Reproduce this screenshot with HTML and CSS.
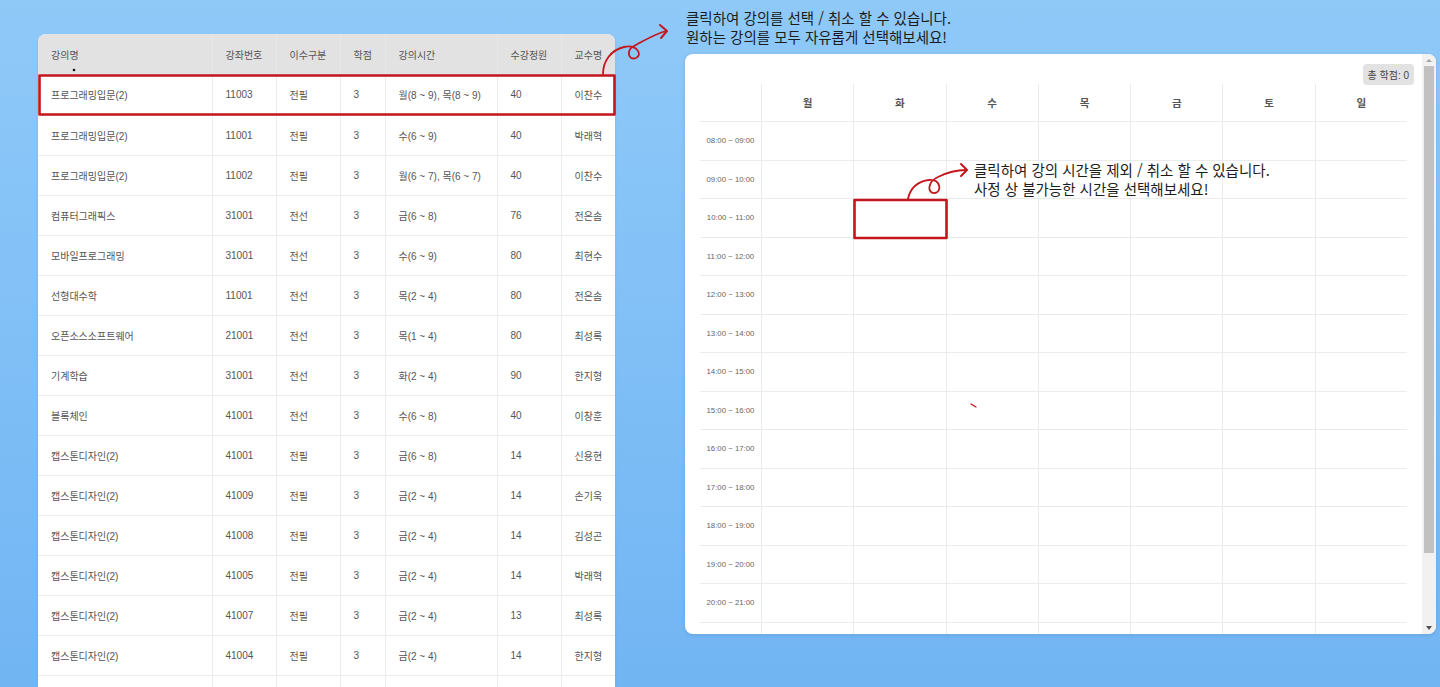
FILE: index.html
```html
<!DOCTYPE html>
<html lang="ko">
<head>
<meta charset="utf-8">
<title>강의 시간표</title>
<link rel="stylesheet" href="styles.css">
</head>
<body>
<main class="stage">
  <section class="course-card">
    <table class="course-table">
      <colgroup>
        <col class="c-name"><col class="c-code"><col class="c-type"><col class="c-credit"><col class="c-time"><col class="c-cap"><col class="c-prof">
      </colgroup>
      <thead>
        <tr><th>강의명</th><th>강좌번호</th><th>이수구분</th><th>학점</th><th>강의시간</th><th>수강정원</th><th>교수명</th></tr>
      </thead>
      <tbody>
        <tr><td>프로그래밍입문(2)</td><td>11003</td><td>전필</td><td>3</td><td>월(8 ~ 9), 목(8 ~ 9)</td><td>40</td><td>이찬수</td></tr>
        <tr><td>프로그래밍입문(2)</td><td>11001</td><td>전필</td><td>3</td><td>수(6 ~ 9)</td><td>40</td><td>박래혁</td></tr>
        <tr><td>프로그래밍입문(2)</td><td>11002</td><td>전필</td><td>3</td><td>월(6 ~ 7), 목(6 ~ 7)</td><td>40</td><td>이찬수</td></tr>
        <tr><td>컴퓨터그래픽스</td><td>31001</td><td>전선</td><td>3</td><td>금(6 ~ 8)</td><td>76</td><td>전은솜</td></tr>
        <tr><td>모바일프로그래밍</td><td>31001</td><td>전선</td><td>3</td><td>수(6 ~ 9)</td><td>80</td><td>최현수</td></tr>
        <tr><td>선형대수학</td><td>11001</td><td>전선</td><td>3</td><td>목(2 ~ 4)</td><td>80</td><td>전은솜</td></tr>
        <tr><td>오픈소스소프트웨어</td><td>21001</td><td>전선</td><td>3</td><td>목(1 ~ 4)</td><td>80</td><td>최성록</td></tr>
        <tr><td>기계학습</td><td>31001</td><td>전선</td><td>3</td><td>화(2 ~ 4)</td><td>90</td><td>한지형</td></tr>
        <tr><td>블록체인</td><td>41001</td><td>전선</td><td>3</td><td>수(6 ~ 8)</td><td>40</td><td>이창훈</td></tr>
        <tr><td>캡스톤디자인(2)</td><td>41001</td><td>전필</td><td>3</td><td>금(6 ~ 8)</td><td>14</td><td>신용현</td></tr>
        <tr><td>캡스톤디자인(2)</td><td>41009</td><td>전필</td><td>3</td><td>금(2 ~ 4)</td><td>14</td><td>손기욱</td></tr>
        <tr><td>캡스톤디자인(2)</td><td>41008</td><td>전필</td><td>3</td><td>금(2 ~ 4)</td><td>14</td><td>김성곤</td></tr>
        <tr><td>캡스톤디자인(2)</td><td>41005</td><td>전필</td><td>3</td><td>금(2 ~ 4)</td><td>14</td><td>박래혁</td></tr>
        <tr><td>캡스톤디자인(2)</td><td>41007</td><td>전필</td><td>3</td><td>금(2 ~ 4)</td><td>13</td><td>최성록</td></tr>
        <tr><td>캡스톤디자인(2)</td><td>41004</td><td>전필</td><td>3</td><td>금(2 ~ 4)</td><td>14</td><td>한지형</td></tr>
        <tr><td></td><td></td><td></td><td></td><td></td><td></td><td></td></tr>
      </tbody>
    </table>
  </section>

  <section class="timetable-panel">
    <div class="tt-scroll">
      <div class="tt-top"><span class="credit-badge">총 학점: 0</span></div>
      <div class="tt-grid">
        <div class="tt-row tt-head">
          <div class="tt-time"></div><div class="tt-day">월</div><div class="tt-day">화</div><div class="tt-day">수</div><div class="tt-day">목</div><div class="tt-day">금</div><div class="tt-day">토</div><div class="tt-day">일</div>
        </div>
        <div class="tt-row"><div class="tt-time">08:00 ~ 09:00</div><div class="tt-cell"></div><div class="tt-cell"></div><div class="tt-cell"></div><div class="tt-cell"></div><div class="tt-cell"></div><div class="tt-cell"></div><div class="tt-cell"></div></div>
        <div class="tt-row"><div class="tt-time">09:00 ~ 10:00</div><div class="tt-cell"></div><div class="tt-cell"></div><div class="tt-cell"></div><div class="tt-cell"></div><div class="tt-cell"></div><div class="tt-cell"></div><div class="tt-cell"></div></div>
        <div class="tt-row"><div class="tt-time">10:00 ~ 11:00</div><div class="tt-cell"></div><div class="tt-cell"></div><div class="tt-cell"></div><div class="tt-cell"></div><div class="tt-cell"></div><div class="tt-cell"></div><div class="tt-cell"></div></div>
        <div class="tt-row"><div class="tt-time">11:00 ~ 12:00</div><div class="tt-cell"></div><div class="tt-cell"></div><div class="tt-cell"></div><div class="tt-cell"></div><div class="tt-cell"></div><div class="tt-cell"></div><div class="tt-cell"></div></div>
        <div class="tt-row"><div class="tt-time">12:00 ~ 13:00</div><div class="tt-cell"></div><div class="tt-cell"></div><div class="tt-cell"></div><div class="tt-cell"></div><div class="tt-cell"></div><div class="tt-cell"></div><div class="tt-cell"></div></div>
        <div class="tt-row"><div class="tt-time">13:00 ~ 14:00</div><div class="tt-cell"></div><div class="tt-cell"></div><div class="tt-cell"></div><div class="tt-cell"></div><div class="tt-cell"></div><div class="tt-cell"></div><div class="tt-cell"></div></div>
        <div class="tt-row"><div class="tt-time">14:00 ~ 15:00</div><div class="tt-cell"></div><div class="tt-cell"></div><div class="tt-cell"></div><div class="tt-cell"></div><div class="tt-cell"></div><div class="tt-cell"></div><div class="tt-cell"></div></div>
        <div class="tt-row"><div class="tt-time">15:00 ~ 16:00</div><div class="tt-cell"></div><div class="tt-cell"></div><div class="tt-cell"></div><div class="tt-cell"></div><div class="tt-cell"></div><div class="tt-cell"></div><div class="tt-cell"></div></div>
        <div class="tt-row"><div class="tt-time">16:00 ~ 17:00</div><div class="tt-cell"></div><div class="tt-cell"></div><div class="tt-cell"></div><div class="tt-cell"></div><div class="tt-cell"></div><div class="tt-cell"></div><div class="tt-cell"></div></div>
        <div class="tt-row"><div class="tt-time">17:00 ~ 18:00</div><div class="tt-cell"></div><div class="tt-cell"></div><div class="tt-cell"></div><div class="tt-cell"></div><div class="tt-cell"></div><div class="tt-cell"></div><div class="tt-cell"></div></div>
        <div class="tt-row"><div class="tt-time">18:00 ~ 19:00</div><div class="tt-cell"></div><div class="tt-cell"></div><div class="tt-cell"></div><div class="tt-cell"></div><div class="tt-cell"></div><div class="tt-cell"></div><div class="tt-cell"></div></div>
        <div class="tt-row"><div class="tt-time">19:00 ~ 20:00</div><div class="tt-cell"></div><div class="tt-cell"></div><div class="tt-cell"></div><div class="tt-cell"></div><div class="tt-cell"></div><div class="tt-cell"></div><div class="tt-cell"></div></div>
        <div class="tt-row"><div class="tt-time">20:00 ~ 21:00</div><div class="tt-cell"></div><div class="tt-cell"></div><div class="tt-cell"></div><div class="tt-cell"></div><div class="tt-cell"></div><div class="tt-cell"></div><div class="tt-cell"></div></div>
        <div class="tt-row"><div class="tt-time"></div><div class="tt-cell"></div><div class="tt-cell"></div><div class="tt-cell"></div><div class="tt-cell"></div><div class="tt-cell"></div><div class="tt-cell"></div><div class="tt-cell"></div></div>
      </div>
    </div>
    <div class="scrollbar">
      <div class="sb-arrow sb-up"></div>
      <div class="sb-track"><div class="sb-thumb"></div></div>
      <div class="sb-arrow sb-down"></div>
    </div>
  </section>

  <p class="note note-top">클릭하여 강의를 선택 / 취소 할 수 있습니다.<br>원하는 강의를 모두 자유롭게 선택해보세요!</p>
  <p class="note note-mid">클릭하여 강의 시간을 제외 / 취소 할 수 있습니다.<br>사정 상 불가능한 시간을 선택해보세요!</p>

  <svg class="overlay" width="1440" height="687" viewBox="0 0 1440 687" aria-hidden="true">
    <g fill="none" stroke="#c4161c" stroke-linecap="round" stroke-linejoin="round">
      <rect x="39.5" y="75.5" width="575" height="39" stroke-width="2.6"/>
      <path d="M603 74 C603 61 611 50 624 47 C637 44 643 55 636 58 C628 61 626 50 634 46 C645 40 655 34 666 31" stroke-width="1.8"/>
      <path d="M660 25 L667 31 L661 38" stroke-width="2"/>
      <rect x="854.5" y="200" width="92" height="38" stroke-width="2.6"/>
      <path d="M908 199 C910 188 918 181 929 180 C941 179 942 192 935 193 C927 194 927 182 938 177 C948 172 956 170 966 170" stroke-width="1.8"/>
      <path d="M961 164 L967 170 L961 176" stroke-width="2"/>
      <path d="M971 404 L976 407" stroke-width="1.4"/>
    </g>
    <circle cx="74" cy="70" r="1.3" fill="#111"/>
  </svg>
</main>
</body>
</html>
```

FILE: styles.css
```css
* { box-sizing: border-box; }

html, body {
  margin: 0;
  padding: 0;
  width: 1440px;
  height: 687px;
  overflow: hidden;
}

body {
  background: linear-gradient(180deg, #8fc9f8 0%, #80bff6 50%, #71b5f3 100%);
  font-family: "Liberation Sans", "Noto Sans CJK KR", sans-serif;
  color: #555;
}

.stage {
  position: relative;
  display: flex;
  align-items: flex-start;
  gap: 70px;
  padding-left: 38px;
  height: 687px;
}

/* ---------- course table ---------- */
.course-card {
  margin-top: 34px;
  width: 577px;
  background: #fff;
  border-radius: 8px 8px 0 0;
  overflow: hidden;
  box-shadow: 0 1px 3px rgba(0, 0, 0, 0.08);
  flex: none;
}

.course-table {
  width: 577px;
  border-collapse: collapse;
  table-layout: fixed;
  font-size: 10px;
}

.c-name { width: 174px; }
.c-code { width: 64px; }
.c-type { width: 64px; }
.c-credit { width: 45px; }
.c-time { width: 112px; }
.c-cap { width: 64px; }
.c-prof { width: 54px; }

.course-table th {
  height: 41px;
  background: #e2e2e2;
  font-weight: normal;
  text-align: left;
  padding: 0 0 0 13px;
  color: #555;
  border-left: 1px solid #e8e8e8;
}

.course-table td {
  height: 40px;
  padding: 0 0 0 13px;
  color: #555;
  border-bottom: 1px solid #ececec;
  border-left: 1px solid #ececec;
  white-space: nowrap;
  overflow: hidden;
}

.course-table th:first-child,
.course-table td:first-child { border-left: none; }

/* ---------- timetable panel ---------- */
.timetable-panel {
  margin-top: 54px;
  width: 751px;
  height: 580px;
  background: #fff;
  border-radius: 8px;
  display: flex;
  overflow: hidden;
  box-shadow: 0 1px 4px rgba(0, 0, 0, 0.1);
  flex: none;
}

.tt-scroll {
  flex: 1;
  padding: 10px 15px 0 15px;
  overflow: hidden;
}

.tt-top {
  display: flex;
  justify-content: flex-end;
  margin-right: -7px;
  height: 20px;
}

.credit-badge {
  display: inline-flex;
  align-items: center;
  height: 21px;
  padding: 0 5px;
  background: #e2e2e2;
  border-radius: 4px;
  font-size: 10px;
  color: #444;
}

.tt-grid {
  width: 707px;
}

.tt-row {
  display: grid;
  grid-template-columns: 61px repeat(7, 1fr);
  height: 38.5px;
}

.tt-row > div {
  border-bottom: 1px solid #ebebeb;
}

.tt-head { height: 38px; }

.tt-day {
  display: flex;
  align-items: center;
  justify-content: center;
  font-weight: bold;
  font-size: 10.5px;
  color: #555;
  border-left: 1px solid #ebebeb;
}

.tt-cell {
  border-left: 1px solid #ebebeb;
}

.tt-time {
  display: flex;
  align-items: center;
  justify-content: center;
  font-size: 7.8px;
  color: #666;
  white-space: nowrap;
}

/* fake scrollbar */
.scrollbar {
  width: 14px;
  flex: none;
  display: flex;
  flex-direction: column;
  background: #f1f1f1;
  padding: 0 2px;
}

.sb-arrow {
  height: 12px;
  flex: none;
  display: flex;
  align-items: center;
  justify-content: center;
}

.sb-up::before {
  content: "";
  border-left: 3px solid transparent;
  border-right: 3px solid transparent;
  border-bottom: 3px solid #a3a3a3;
}

.sb-down::before {
  content: "";
  border-left: 3.5px solid transparent;
  border-right: 3.5px solid transparent;
  border-top: 4px solid #505050;
}

.sb-track {
  flex: 1;
  display: flex;
  flex-direction: column;
}

.sb-thumb {
  height: 487px;
  background: #c1c1c1;
}

/* ---------- annotations ---------- */
.note {
  position: absolute;
  margin: 0;
  font-family: "Noto Sans CJK KR", "Liberation Sans", sans-serif;
  font-size: 14.5px;
  line-height: 19px;
  color: #1c1c1c;
  white-space: nowrap;
}

.note-top { left: 686px; top: 8px; }
.note-mid { left: 974px; top: 160px; }

.overlay {
  position: absolute;
  left: 0;
  top: 0;
  pointer-events: none;
}
```
